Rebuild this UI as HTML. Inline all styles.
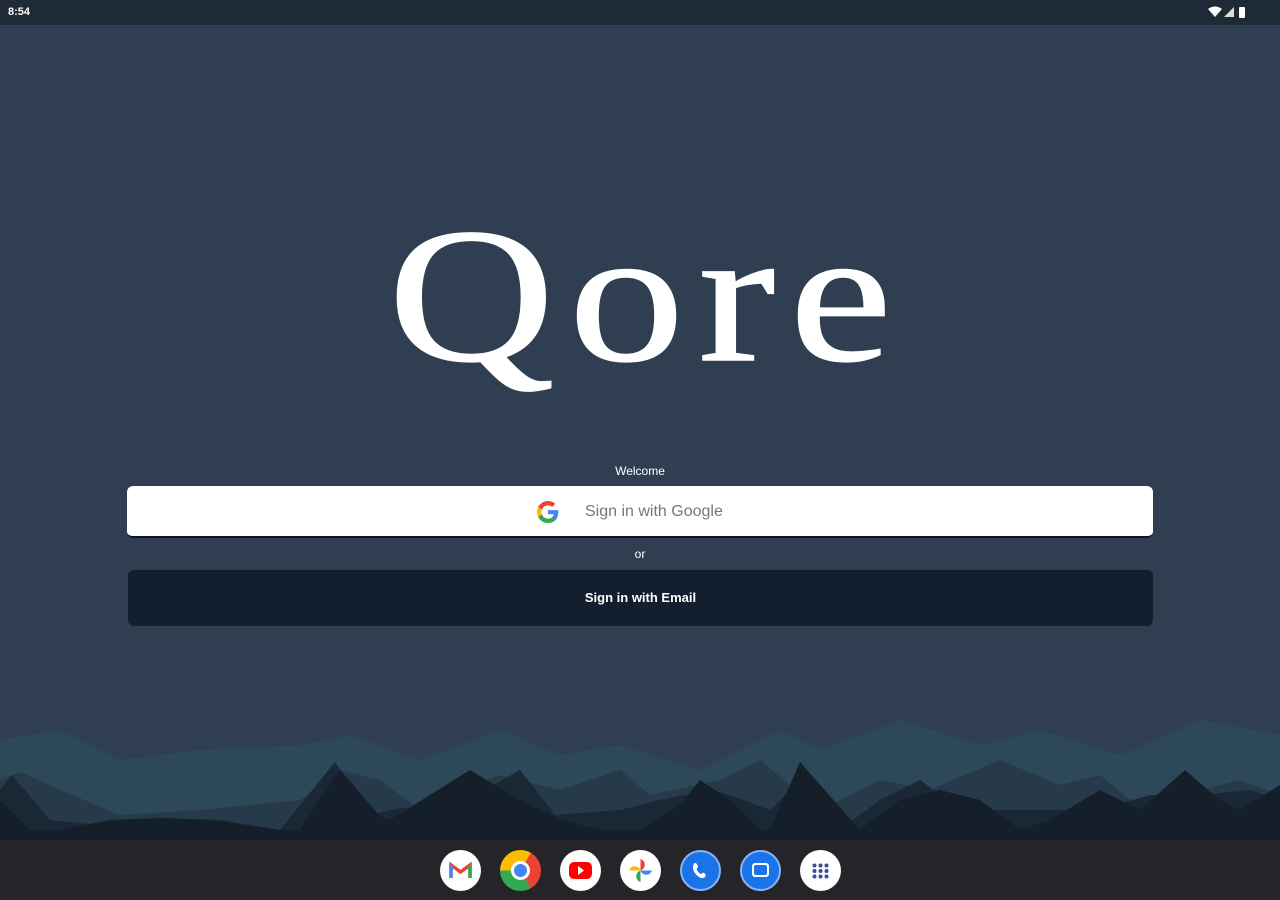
<!DOCTYPE html>
<html><head><meta charset="utf-8"><style>
*{margin:0;padding:0;box-sizing:border-box}
body{width:1280px;height:900px;overflow:hidden;background:#2f3e50;font-family:"Liberation Sans",sans-serif;position:relative}
.status{position:absolute;top:0;left:0;width:1280px;height:25px;background:#1f2a37;color:#fff;font-size:11px;font-weight:bold}
.logo{position:absolute;left:0;width:1280px;top:200px;text-align:center;font-family:"Liberation Serif",serif;font-size:192px;color:#fff;line-height:1;letter-spacing:12px;padding-left:12px;-webkit-text-stroke:1.5px #fff;transform:scaleX(1.2)}
.welcome{position:absolute;top:464px;width:1280px;text-align:center;color:#fff;font-size:12px}
.gbtn{position:absolute;left:127px;top:486px;width:1026px;height:52px;background:#fff;border-radius:6px;border-bottom:2px solid #0d1030}
.gbtn span{position:absolute;left:458px;top:17px;font-size:16px;color:#777}
.or{position:absolute;top:547px;width:1280px;text-align:center;color:#fff;font-size:12px}
.ebtn{position:absolute;left:128px;top:570px;width:1025px;height:56px;background:#131f2e;border-radius:6px;color:#fff;font-size:13px;font-weight:bold;text-align:center;line-height:56px}
.dock{position:absolute;top:840px;left:0;width:1280px;height:60px;background:#252529}
.ic{position:absolute;top:850px;width:41px;height:41px;border-radius:50%;background:#fff}
</style></head><body>
<div class="status"><span style="position:absolute;left:8px;top:6px">8:54</span>
<svg style="position:absolute;left:1208px;top:6px" width="50" height="14"><path d="M0 3 Q7 -2 14 3 L7 11Z" fill="#fff"/><path d="M26 1 L26 11 L16 11Z" fill="#ddd"/><rect x="31" y="1" width="6" height="11" rx="1" fill="#fff"/></svg></div>
<div class="logo">Qore</div>
<div class="welcome">Welcome</div>
<div class="gbtn">
<svg style="position:absolute;left:410px;top:15px" width="22" height="22" viewBox="0 0 48 48"><path fill="#EA4335" d="M24 9.5c3.5 0 6.6 1.2 9.1 3.6l6.8-6.8C35.8 2.4 30.2 0 24 0 14.6 0 6.6 5.4 2.6 13.2l7.9 6.2C12.4 13.7 17.7 9.5 24 9.5z"/><path fill="#4285F4" d="M46.5 24.5c0-1.6-.1-3.1-.4-4.5H24v9h12.7c-.6 3-2.3 5.5-4.8 7.2l7.7 6c4.5-4.2 6.9-10.3 6.9-17.7z"/><path fill="#FBBC05" d="M10.5 28.6c-.5-1.5-.8-3-.8-4.6s.3-3.1.8-4.6l-7.9-6.2C.9 16.5 0 20.1 0 24s.9 7.5 2.6 10.8l7.9-6.2z"/><path fill="#34A853" d="M24 48c6.5 0 11.9-2.1 15.9-5.8l-7.7-6c-2.2 1.5-5 2.3-8.2 2.3-6.3 0-11.6-4.2-13.5-9.9l-7.9 6.2C6.6 42.6 14.6 48 24 48z"/></svg>
<span>Sign in with Google</span></div>
<div class="or">or</div>
<div class="ebtn">Sign in with Email</div>
<svg style="position:absolute;left:0;top:700px" width="1280" height="140">
<polygon fill="#2d4858" points="0,40 60,30 120,60 200,50 300,45 350,35 420,60 500,30 560,55 620,45 700,70 780,30 820,50 900,20 980,45 1040,30 1120,55 1200,20 1280,35 1280,140 0,140"/>
<polygon fill="#263a4a" points="0,80 20,72 60,90 120,115 200,110 300,100 340,70 380,80 420,110 500,75 560,90 620,70 650,95 720,80 760,60 820,110 880,80 930,90 1000,60 1060,85 1100,75 1130,100 1200,90 1240,80 1280,95 1280,140 0,140"/>
<polygon fill="#1a2734" points="0,90 12,75 50,120 100,125 160,118 220,120 280,130 335,62 370,115 400,108 450,110 520,70 555,115 620,110 660,100 710,90 730,95 770,110 800,80 840,130 880,100 920,80 960,110 1000,110 1050,110 1100,110 1150,95 1200,95 1250,90 1280,100 1280,140 0,140"/>
<polygon fill="#141f2a" points="0,100 30,130 60,130 110,120 160,118 210,120 280,130 300,130 340,70 380,116 390,120 470,70 520,100 560,120 600,130 640,130 680,105 700,80 730,100 760,130 770,130 800,62 860,130 900,100 940,90 980,100 1020,130 1050,120 1100,90 1140,110 1185,70 1220,100 1240,110 1280,85 1280,140 0,140"/>
</svg>
<div class="dock"></div>
<div class="ic" style="left:440px"><svg width="41" height="41"><path d="M11 28V15l9.5 7 9.5-7v13" fill="none" stroke="#ea4335" stroke-width="3.5"/><path d="M11 15v13" stroke="#4285f4" stroke-width="3.5"/><path d="M30 15v13" stroke="#34a853" stroke-width="3.5"/></svg></div>
<div class="ic" style="left:500px;background:conic-gradient(from 30deg,#ea4335 0 120deg,#34a853 120deg 240deg,#fbbc05 240deg)"><div style="position:absolute;left:11px;top:11px;width:19px;height:19px;border-radius:50%;background:#fff"></div><div style="position:absolute;left:14px;top:14px;width:13px;height:13px;border-radius:50%;background:#4285f4"></div></div>
<div class="ic" style="left:560px"><div style="position:absolute;left:9px;top:12px;width:23px;height:17px;border-radius:5px;background:#f00"></div><svg style="position:absolute;left:0;top:0" width="41" height="41"><path d="M18 16l6 4.5-6 4.5z" fill="#fff"/></svg></div>
<div class="ic" style="left:620px"><svg width="41" height="41"><path d="M20.5 20.5V9a6 6 0 0 1 0 11.5z" fill="#ea4335"/><path d="M20.5 20.5H32a6 6 0 0 1-11.5 0z" fill="#4285f4"/><path d="M20.5 20.5V32a6 6 0 0 1 0-11.5z" fill="#34a853"/><path d="M20.5 20.5H9a6 6 0 0 1 11.5 0z" fill="#fbbc05"/></svg></div>
<div class="ic" style="left:680px;background:#1a73e8;border:2px solid #8ab4f8"><svg width="37" height="37"><path d="M13 11c2 0 3 3 3 4s-2 1-1 3 3 4 4 4 1-2 3-1 2 3 1 4c-1 1-3 2-6 0s-6-6-6-9 1-5 2-5z" fill="#fff"/></svg></div>
<div class="ic" style="left:740px;background:#1a73e8;border:2px solid #8ab4f8"><div style="position:absolute;left:10px;top:11px;width:17px;height:14px;border-radius:3px;background:#fff"></div><div style="position:absolute;left:12px;top:13px;width:13px;height:10px;border-radius:2px;background:#1a73e8"></div></div>
<div class="ic" style="left:800px"><svg width="41" height="41" fill="#3c4a9a"><circle cx="14.5" cy="15.5" r="2"/><circle cx="20.5" cy="15.5" r="2"/><circle cx="26.5" cy="15.5" r="2"/><circle cx="14.5" cy="21" r="2"/><circle cx="20.5" cy="21" r="2"/><circle cx="26.5" cy="21" r="2"/><circle cx="14.5" cy="26.5" r="2"/><circle cx="20.5" cy="26.5" r="2"/><circle cx="26.5" cy="26.5" r="2"/></svg></div>
</body></html>
